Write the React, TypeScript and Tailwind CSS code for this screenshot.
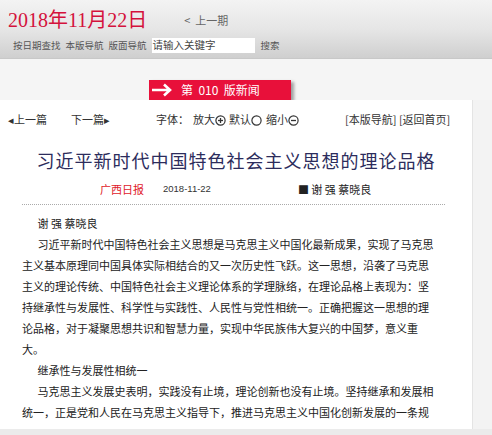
const CJK = '"Noto Sans CJK SC", "Liberation Sans", sans-serif';

function Arrow() {
  return (
    <svg width="22" height="14" viewBox="0 0 22 14" className="shrink-0">
      <path d="M1 7h18M13 1.5l6 5.5-6 5.5" stroke="#fff" strokeWidth="2.6" fill="none" strokeLinejoin="miter" />
    </svg>
  );
}

function CircleIcon({ sign }: { sign: '+' | '-' | '' }) {
  return (
    <svg width="11" height="11" viewBox="0 0 11 11" className="inline-block align-[-2px]">
      <circle cx="5.5" cy="5.5" r="4.6" stroke="#333" strokeWidth="1.2" fill="none" />
      {sign !== '' && <path d="M3 5.5h5" stroke="#333" strokeWidth="1.3" />}
      {sign === '+' && <path d="M5.5 3v5" stroke="#333" strokeWidth="1.3" />}
    </svg>
  );
}

export default function App() {
  return (
    <div className="w-[492px] h-[435px] overflow-hidden bg-[#ebebeb] text-[#333]" style={{ fontFamily: CJK }}>
      {/* top header */}
      <div className="h-[59px] bg-gradient-to-b from-[#f3f3f3] via-[#e6e6e6] to-[#cfcfcf] border-b border-[#c8c8c8]">
        <div className="flex items-end h-[30px] pl-[8px]">
          <span className="text-[20px] leading-none text-[#d4123c]" style={{ fontFamily: '"Liberation Serif", "Noto Sans CJK SC", serif' }}>
            2018年11月22日
          </span>
          <span className="ml-[37px] mb-[4px] text-[11px] leading-none text-[#666]">&lt;&nbsp;&nbsp;上一期</span>
        </div>
        <div className="flex items-center h-[22px] mt-[4px] pl-[13px] text-[9.5px] text-[#555] gap-[5px]">
          <span>按日期查找</span>
          <span>本版导航</span>
          <span>版面导航</span>
          <div className="w-[103px] h-[15px] bg-white flex items-center pl-[1px] text-[10.5px] text-[#444]">请输入关键字</div>
          <span className="ml-[1px]">搜索</span>
        </div>
      </div>

      {/* banner area */}
      <div className="bg-[#f5f5f5] h-[41px] pt-[21px] pl-[149px]">
        <div className="w-[142px] h-[20px] bg-[#e8103a] flex items-center pl-[2px] gap-[8px] shadow-[3px_2px_3px_rgba(0,0,0,0.35)]">
          <Arrow />
          <span className="text-[12px] leading-none text-white">第&nbsp;&nbsp;010&nbsp;&nbsp;版新闻</span>
        </div>
      </div>

      {/* content */}
      <div className="flex bg-[#f3f3f3]">
        <div className="w-[473px] h-[329px] overflow-hidden bg-white border-r border-[#e4e4e4]">
          <div className="flex items-center h-[26px] mt-[6px] text-[11px] text-[#333]">
            <span className="ml-[8px]">◂上一篇</span>
            <span className="ml-[24px]">下一篇▸</span>
            <span className="ml-[46px]">字体：</span>
            <span className="ml-[4px]">放大<CircleIcon sign="+" /></span>
            <span className="ml-[3px]">默认<CircleIcon sign="" /></span>
            <span className="ml-[4px]">缩小<CircleIcon sign="-" /></span>
            <span className="ml-[46px]">[本版导航] [返回首页]</span>
          </div>
          <div className="text-center text-[18px] leading-none tracking-[1px] text-[#2c2c5c] mt-[19px]">
            习近平新时代中国特色社会主义思想的理论品格
          </div>
          <div className="flex items-center h-[16px] mt-[12px] text-[11px] leading-none">
            <span className="ml-[100px] text-[#e0202a]">广西日报</span>
            <span className="ml-[19px] text-[9.5px] text-[#333]" style={{ fontFamily: '"Liberation Sans", sans-serif' }}>2018-11-22</span>
            <span className="ml-[87px] text-[#222]">■ 谢 强 蔡晓良</span>
          </div>
          <div className="mx-[22px] mt-[7px] border-t border-dotted border-[#aaa] w-[423px]" />
          <div className="ml-[22px] w-[412px] mt-[8px] text-[11px] leading-[21px] text-[#222]">
            <p className="pl-[15.5px]">谢 强 蔡晓良</p>
            <p className="indent-[15.5px]">
              习近平新时代中国特色社会主义思想是马克思主义中国化最新成果，实现了马克思主义基本原理同中国具体实际相结合的又一次历史性飞跃。这一思想，沿袭了马克思主义的理论传统、中国特色社会主义理论体系的学理脉络，在理论品格上表现为：坚持继承性与发展性、科学性与实践性、人民性与党性相统一。正确把握这一思想的理论品格，对于凝聚思想共识和智慧力量，实现中华民族伟大复兴的中国梦，意义重<br />大。
            </p>
            <p className="indent-[15.5px]">继承性与发展性相统一</p>
            <p className="indent-[15.5px]">
              马克思主义发展史表明，实践没有止境，理论创新也没有止境。坚持继承和发展相统一，正是党和人民在马克思主义指导下，推进马克思主义中国化创新发展的一条规
            </p>
          </div>
        </div>
        <div className="flex-1" />
      </div>
    </div>
  );
}
